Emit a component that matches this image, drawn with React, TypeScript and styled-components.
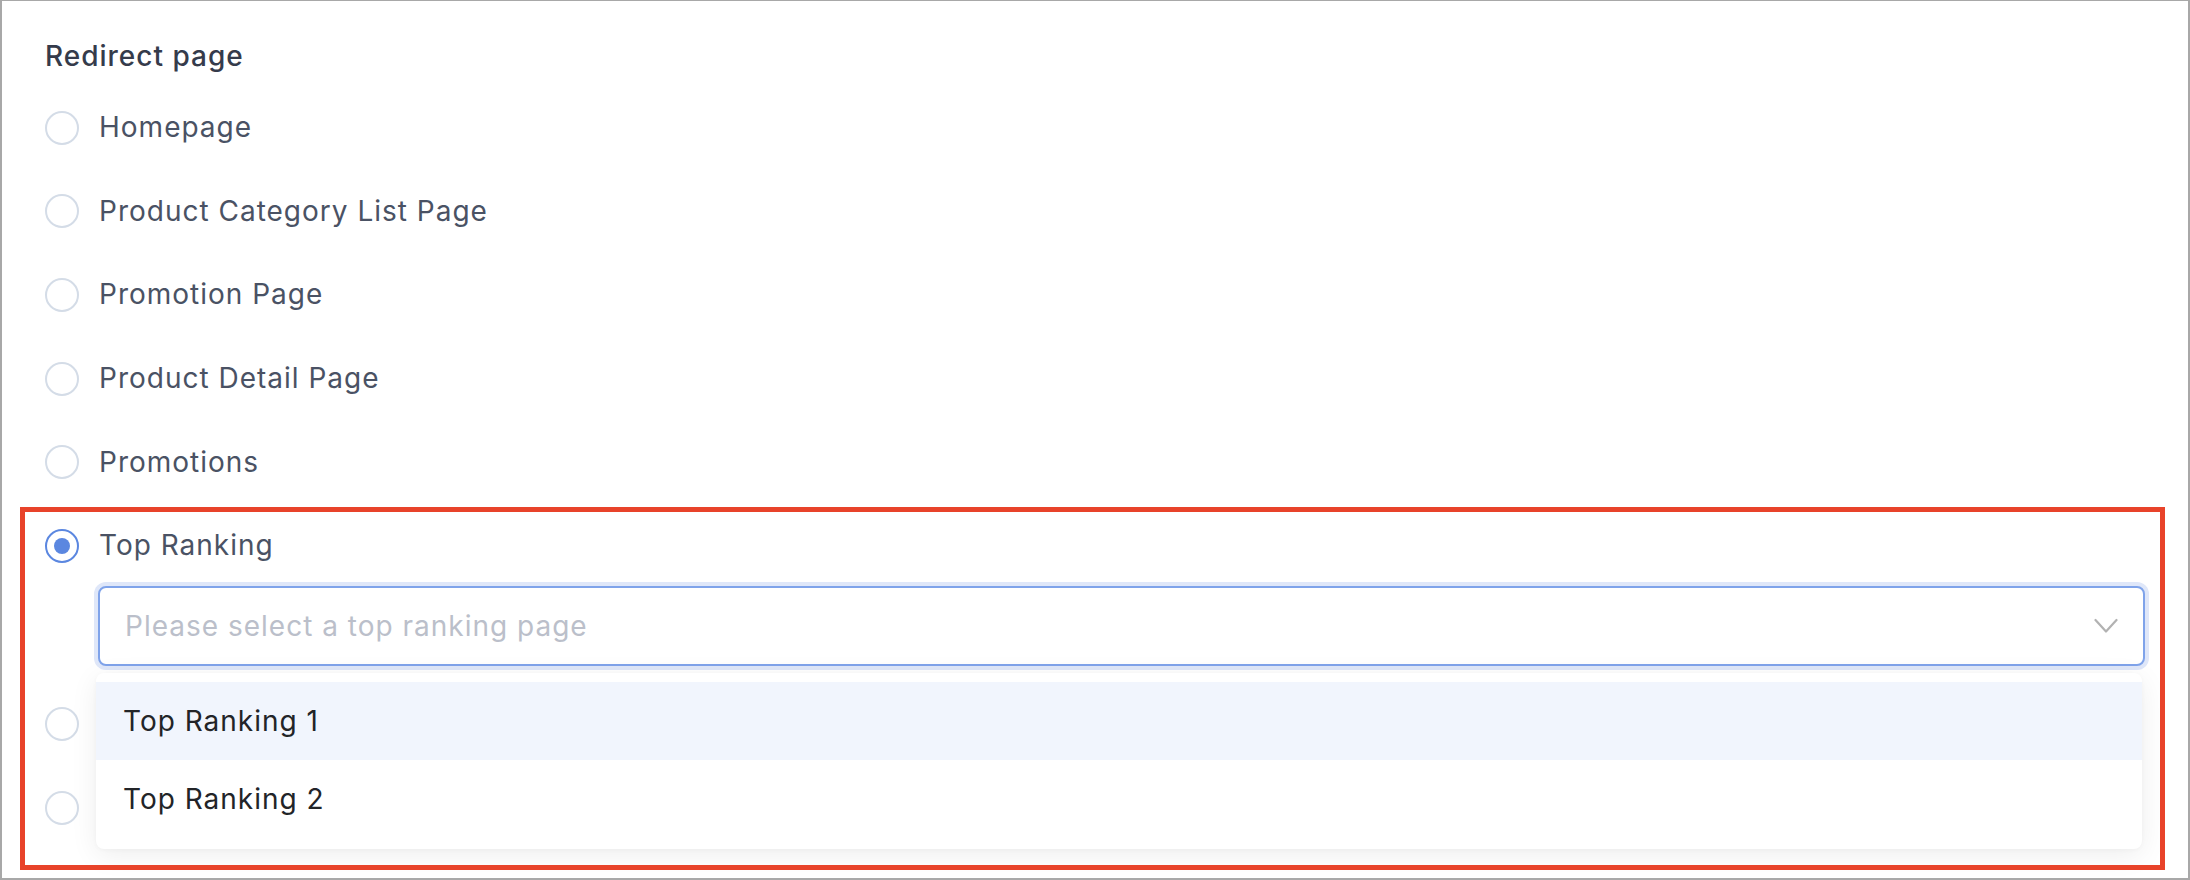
import React, { useState } from "react";
import styled, { createGlobalStyle } from "styled-components";

const GlobalStyle = createGlobalStyle`
  html, body {
    margin: 0;
    padding: 0;
    background: #ffffff;
  }
  body {
    font-family: Inter, "Noto Sans", "Liberation Sans", sans-serif;
    letter-spacing: 1px;
  }
`;

const Frame = styled.div`
  position: relative;
  box-sizing: border-box;
  width: 2190px;
  height: 880px;
  overflow: hidden;
  background: #ffffff;
  border: 2px solid #a8a8a8;
  border-top-width: 1px;
  padding: 35px 43px 0 43px;
`;

const Title = styled.div`
  height: 40px;
  line-height: 40px;
  margin-bottom: 9.5px;
  font-size: 28px;
  font-weight: 550;
  color: #353b4b;
`;

const Options = styled.div`
  display: flex;
  flex-direction: column;
`;

const Row = styled.label<{ $spaced?: boolean }>`
  display: flex;
  align-items: center;
  gap: 20px;
  height: 83.6px;
  margin-top: ${(p) => (p.$spaced ? "16px" : "0")};
  font-size: 28px;
  color: #4a5264;
  cursor: pointer;
`;

const Radio = styled.span<{ $checked?: boolean }>`
  box-sizing: border-box;
  width: 34px;
  height: 34px;
  flex: none;
  margin-top: 1px;
  border-radius: 50%;
  border: 2px solid ${(p) => (p.$checked ? "#5b87e0" : "#d4dce7")};
  display: flex;
  align-items: center;
  justify-content: center;

  &::after {
    content: "";
    width: 16px;
    height: 16px;
    border-radius: 50%;
    background: #5b87e0;
    display: ${(p) => (p.$checked ? "block" : "none")};
  }
`;

const SelectWrap = styled.div`
  position: relative;
  margin-left: 53px;
  margin-top: -1px;
`;

const Trigger = styled.div`
  box-sizing: border-box;
  height: 80px;
  display: flex;
  align-items: center;
  justify-content: space-between;
  padding: 0 25px 0 25px;
  border: 2px solid #7fa3ea;
  border-radius: 8px;
  box-shadow: 0 0 0 4px #dfe7f9;
  background: #ffffff;
`;

const Placeholder = styled.span`
  font-size: 28px;
  color: #bbbfca;
`;

const Menu = styled.ul`
  position: absolute;
  z-index: 2;
  top: 87px;
  left: -2px;
  right: 3px;
  margin: 0;
  padding: 9px 0 11px 0;
  list-style: none;
  background: #ffffff;
  border-radius: 8px;
  box-shadow: 0 6px 28px rgba(0, 0, 0, 0.07), 0 1px 4px rgba(0, 0, 0, 0.03);
`;

const MenuItem = styled.li<{ $active?: boolean }>`
  height: 78px;
  display: flex;
  align-items: center;
  padding-left: 27px;
  font-size: 28px;
  color: #222428;
  background: ${(p) => (p.$active ? "#f1f5fd" : "#ffffff")};
`;

const Outline = styled.div`
  position: absolute;
  z-index: 3;
  top: 506px;
  left: 18px;
  width: 2145px;
  height: 363px;
  box-sizing: border-box;
  border: 5px solid #e8432a;
  pointer-events: none;
`;

const Chevron = () => (
  <svg width="24" height="16" viewBox="0 0 24 16" fill="none">
    <path d="M1.5 2 L12 13.5 L22.5 2" stroke="#b2b2b2" strokeWidth="2.2" strokeLinecap="round" strokeLinejoin="round" />
  </svg>
);

const pages = [
  "Homepage",
  "Product Category List Page",
  "Promotion Page",
  "Product Detail Page",
  "Promotions",
];

const App: React.FC = () => {
  const [active] = useState(0);

  return (
    <>
      <GlobalStyle />
      <Frame>
        <Title>Redirect page</Title>
        <Options>
          {pages.map((p) => (
            <Row key={p}>
              <Radio />
              {p}
            </Row>
          ))}
          <Row>
            <Radio $checked />
            Top Ranking
          </Row>
          <SelectWrap>
            <Trigger>
              <Placeholder>Please select a top ranking page</Placeholder>
              <Chevron />
            </Trigger>
            <Menu>
              <MenuItem $active={active === 0}>Top Ranking 1</MenuItem>
              <MenuItem $active={active === 1}>Top Ranking 2</MenuItem>
            </Menu>
          </SelectWrap>
          {/* the next two options sit under the open menu */}
          <Row $spaced>
            <Radio />
          </Row>
          <Row>
            <Radio />
          </Row>
        </Options>
        <Outline />
      </Frame>
    </>
  );
};

export default App;
